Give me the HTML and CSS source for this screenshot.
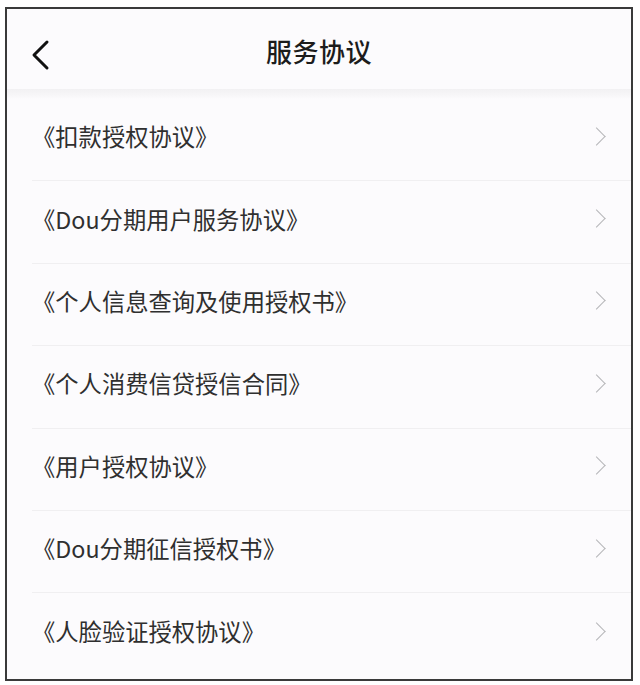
FILE: index.html
```html
<!DOCTYPE html>
<html lang="zh-CN">
<head>
  <meta charset="UTF-8" />
  <meta name="viewport" content="width=device-width, initial-scale=1.0"/>
  <title>服务协议</title>
  <link rel="stylesheet" href="styles.css">
</head>
<body>
  <div class="frame">
    <div class="header">
      <a class="back" href="#">
        <svg width="20" height="32" viewBox="0 0 20 32">
          <path d="M16 3 L3 16 L16 29" fill="none" stroke="#111" stroke-width="3" stroke-linecap="round" stroke-linejoin="round"/>
        </svg>
      </a>
      <h1>服务协议</h1>
    </div>
    <div class="shade"></div>
    <ul class="list">
      <li><span>《扣款授权协议》</span><i class="arrow"></i></li>
      <li><span>《Dou分期用户服务协议》</span><i class="arrow"></i></li>
      <li><span>《个人信息查询及使用授权书》</span><i class="arrow"></i></li>
      <li><span>《个人消费信贷授信合同》</span><i class="arrow"></i></li>
      <li><span>《用户授权协议》</span><i class="arrow"></i></li>
      <li><span>《Dou分期征信授权书》</span><i class="arrow"></i></li>
      <li><span>《人脸验证授权协议》</span><i class="arrow"></i></li>
    </ul>
  </div>
</body>
</html>
```

FILE: styles.css
```css
body {
  margin: 0;
  background-color: #ffffff;
  font-family: "Noto Sans CJK SC", "Noto Sans", sans-serif;
  color: #2f2f2f;
}
.frame {
  box-sizing: border-box;
  width: 628px;
  height: 674px;
  margin: 7px 0 0 5px;
  border: 2px solid #3a3a3a;
  background-color: #fcfbfd;
  overflow: hidden;
}
.header {
  height: 80px;
  display: flex;
  align-items: center;
  justify-content: center;
  position: relative;
}
.header h1 {
  margin: 0;
  padding-top: 2px;
  font-size: 26px;
  font-weight: 500;
  color: #1c1c1c;
  letter-spacing: 0.5px;
}
.back {
  position: absolute;
  left: 24px;
  top: 30px;
  display: flex;
}
.shade {
  height: 10px;
  background: linear-gradient(#f2f1f3, #f7f6f8 60%, #fcfbfd);
}
.list {
  list-style: none;
  margin: 0;
  padding: 0;
}
.list li {
  box-sizing: border-box;
  height: 82.4px;
  margin-left: 25px;
  padding: 0 24px 7px 0;
  display: flex;
  align-items: center;
  justify-content: space-between;
  border-bottom: 1.5px solid #f0eff1;
  font-size: 23.3px;
}
.list li:last-child {
  border-bottom: none;
}
.arrow {
  width: 12px;
  height: 12px;
  border-top: 1.6px solid #b6b6b8;
  border-right: 1.6px solid #b6b6b8;
  transform: rotate(45deg);
  margin-right: 4px;
}
```
